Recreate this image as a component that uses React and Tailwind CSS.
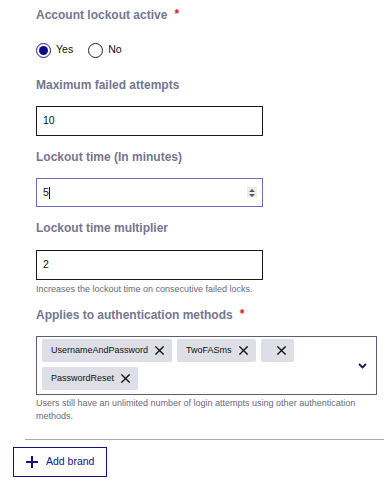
import React from "react";

const Label = ({ children, required, className = "" }) => (
  <div className={"flex items-start text-[12px] leading-[14px] font-bold text-[#76768f] " + className}>
    <span>{children}</span>
    {required && <span className="ml-[7px] text-[#d91b1b] text-[12px] leading-[12px]">*</span>}
  </div>
);

const X = () => (
  <svg width="9" height="9" viewBox="0 0 10 10" className="shrink-0">
    <path d="M1 1L9 9M9 1L1 9" stroke="#111" strokeWidth="1.5" strokeLinecap="square" />
  </svg>
);

const Chip = ({ text }) => (
  <div className="flex items-center h-[23px] bg-[#dedee6] rounded-[2px] pl-[9px] pr-[8px] gap-[7px] text-[9px] text-[#111]">
    <span>{text}</span>
    <X />
  </div>
);

export default function App() {
  return (
    <div className="w-[384px] h-[483px] bg-white overflow-hidden" style={{ fontFamily: '"Liberation Sans", Arial, sans-serif' }}>
      <div className="pl-[36px] pt-[8px]">
        <Label required>Account lockout active</Label>
        <div className="mt-[20px] flex items-center h-[16px] text-[10.5px] text-[#111]">
          <span className="w-[15px] h-[15px] rounded-full border-[1.5px] border-[#1a1a8c] flex items-center justify-center">
            <span className="w-[9px] h-[9px] rounded-full bg-[#0a0a8a]" />
          </span>
          <span className="ml-[5px]">Yes</span>
          <span className="ml-[15px] w-[15px] h-[15px] rounded-full border-[1.5px] border-[#222]" />
          <span className="ml-[5px]">No</span>
        </div>

        <Label className="mt-[20px]">Maximum failed attempts</Label>
        <div className="mt-[14px] w-[227px] h-[30px] border-[1.5px] border-[#1a1a1a] flex items-center pl-[6px] text-[10.5px] text-[#111]">
          10
        </div>

        <Label className="mt-[14px]">Lockout time (In minutes)</Label>
        <div className="mt-[14px] w-[227px] h-[29px] border-[1.5px] border-[#6c6cc8] flex items-center pl-[6px] pr-[5px] text-[10.5px] text-[#111]">
          <span>5</span>
          <span className="w-[1px] h-[12px] bg-[#111]" />
          <span className="ml-auto w-[10px] h-[11px] bg-[#ececec] flex flex-col items-center justify-center gap-[1px]">
            <svg width="6" height="8" viewBox="0 0 6 8">
              <path d="M3 0L6 3H0Z M0 5H6L3 8Z" fill="#555" />
            </svg>
          </span>
        </div>

        <Label className="mt-[14px]">Lockout time multiplier</Label>
        <div className="mt-[15px] w-[227px] h-[30px] border-[1.5px] border-[#1a1a1a] flex items-center pl-[6px] text-[10.5px] text-[#111]">
          2
        </div>
        <div className="mt-[4px] text-[9px] leading-[11px] text-[#6a6a78]">
          Increases the lockout time on consecutive failed locks.
        </div>

        <Label required className="mt-[13px]">Applies to authentication methods</Label>
        <div className="mt-[14px] w-[341px] h-[59px] border-[1.5px] border-[#5c5c7e] flex items-center pl-[5px] pr-[9px]">
          <div className="flex flex-wrap gap-[5px] flex-1 self-start pt-[2px]">
            <Chip text="UsernameAndPassword" />
            <Chip text="TwoFASms" />
            <Chip text="" />
            <Chip text="PasswordReset" />
          </div>
          <svg width="9" height="6" viewBox="0 0 9 6" className="shrink-0">
            <path d="M1 1L4.5 4.5L8 1" stroke="#1a1a4a" strokeWidth="1.8" fill="none" />
          </svg>
        </div>
        <div className="mt-[2px] w-[340px] text-[9px] leading-[12.5px] text-[#6a6a78]">
          Users still have an unlimited number of login attempts using other authentication methods.
        </div>
      </div>

      <div className="ml-[25px] mt-[17px] h-[1px] bg-[#aaaaaa]" />

      <div className="pl-[13px] mt-[7px]">
        <button className="w-[94px] h-[30px] border-[1.5px] border-[#12128a] flex items-center pl-[12px] gap-[8px] text-[10.5px] text-[#12128a]">
          <svg width="12" height="12" viewBox="0 0 12 12">
            <path d="M6 0V12M0 6H12" stroke="#12127a" strokeWidth="2" />
          </svg>
          <span>Add brand</span>
        </button>
      </div>
    </div>
  );
}
